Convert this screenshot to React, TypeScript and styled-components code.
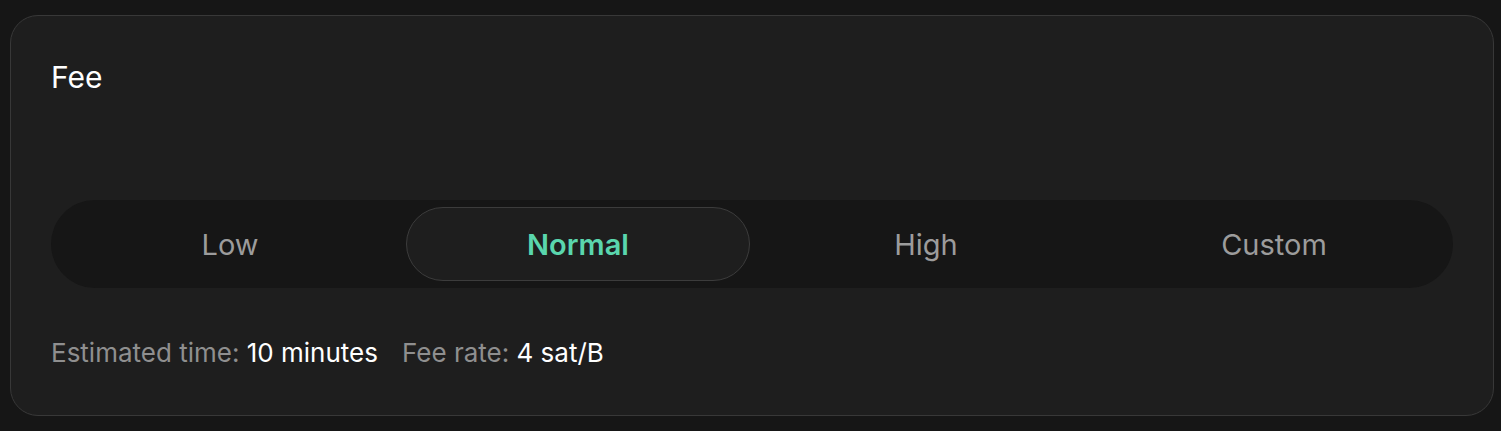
import React, { useState } from "react";
import styled, { createGlobalStyle } from "styled-components";

const GlobalStyle = createGlobalStyle`
  html, body {
    margin: 0;
    background: #161616;
  }
  body {
    font-family: Inter, "Noto Sans", sans-serif;
  }
`;

const Page = styled.div`
  padding: 15px 7px 15px 10px;
`;

const Card = styled.section`
  display: flex;
  flex-direction: column;
  height: 401px;
  box-sizing: border-box;
  padding: 44px 40px 0;
  background: #1e1e1e;
  border: 1px solid #383838;
  border-radius: 28px;
`;

const Title = styled.h2`
  margin: 0;
  font-size: 30px;
  line-height: 34px;
  font-weight: 400;
  color: #ffffff;
`;

const Track = styled.div`
  display: grid;
  grid-template-columns: repeat(4, 1fr);
  gap: 4px;
  margin-top: 106px;
  padding: 7px;
  height: 88px;
  box-sizing: border-box;
  background: #161616;
  border-radius: 44px;
`;

const Option = styled.button<{ $active: boolean }>`
  display: flex;
  align-items: center;
  justify-content: center;
  padding: 0;
  font-family: inherit;
  font-size: 29px;
  font-weight: ${(p) => (p.$active ? 600 : 400)};
  color: ${(p) => (p.$active ? "#5ad6ad" : "#9c9c9c")};
  background: ${(p) => (p.$active ? "#1e1e1e" : "transparent")};
  border: 1px solid ${(p) => (p.$active ? "#3c3c3c" : "transparent")};
  border-radius: 37px;
  cursor: pointer;
`;

const Info = styled.div`
  display: flex;
  gap: 24px;
  margin-top: 49px;
  font-size: 26px;
  line-height: 32px;
`;

const Stat = styled.span`
  color: #8f8f8f;
`;

const Value = styled.span`
  color: #ffffff;
`;

const options = ["Low", "Normal", "High", "Custom"];

export default function App() {
  const [fee, setFee] = useState("Normal");

  return (
    <Page>
      <GlobalStyle />
      <Card>
        <Title>Fee</Title>
        <Track>
          {options.map((o) => (
            <Option key={o} $active={fee === o} onClick={() => setFee(o)}>
              {o}
            </Option>
          ))}
        </Track>
        <Info>
          <Stat>
            Estimated time: <Value>10 minutes</Value>
          </Stat>
          <Stat>
            Fee rate: <Value>4 sat/B</Value>
          </Stat>
        </Info>
      </Card>
    </Page>
  );
}
